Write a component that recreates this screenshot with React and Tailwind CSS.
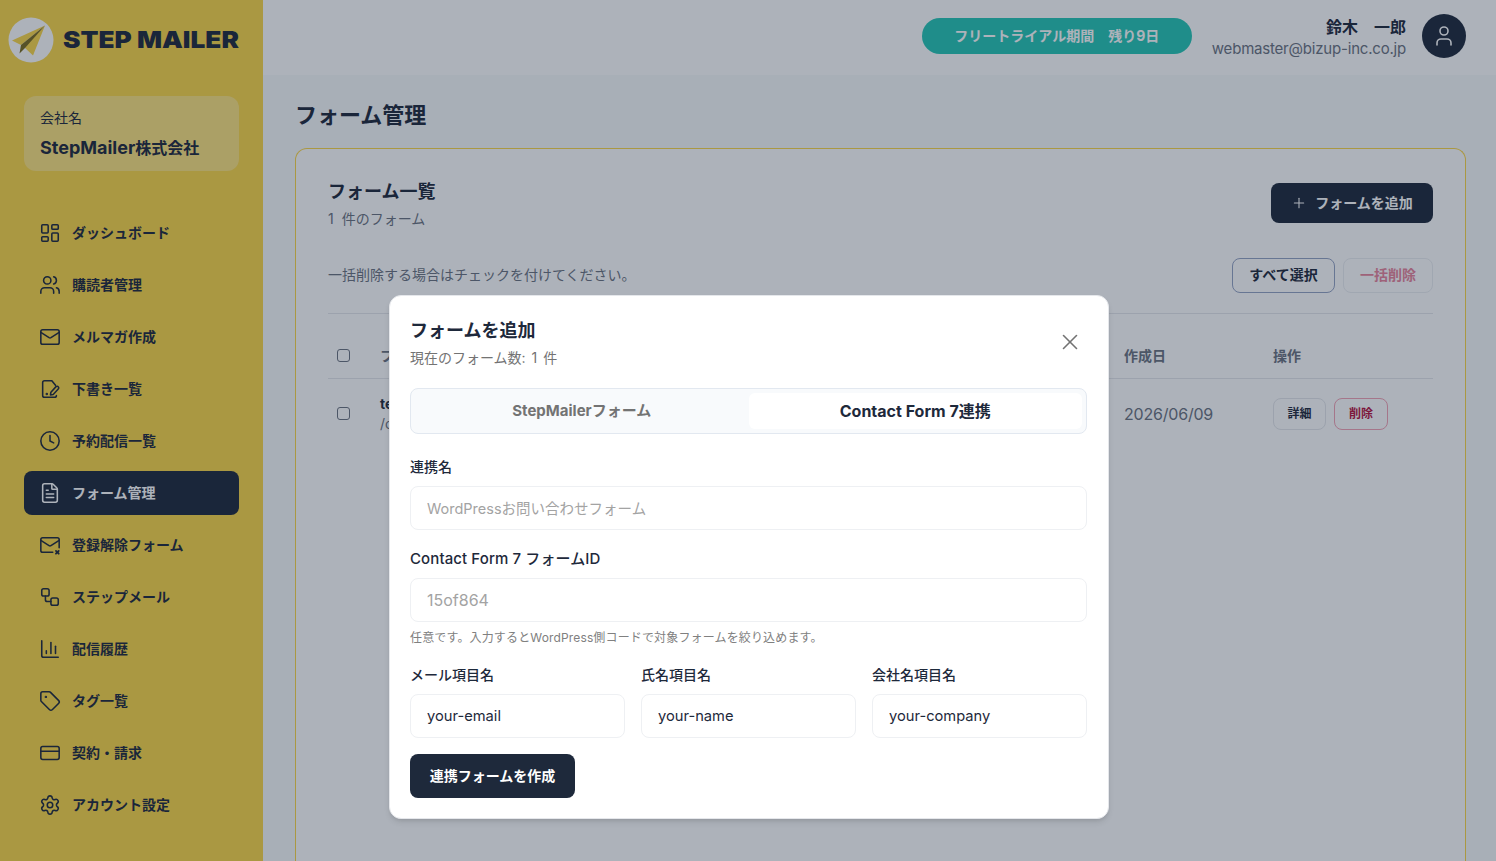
import React from 'react';
import {
  LayoutDashboard, Users, Mail, Clock, FileText, Workflow,
  ChartColumn, Tag, CreditCard, Settings, User, Plus, X,
} from 'lucide-react';

const DraftIcon = ({ size }) => (
  <svg width={size} height={size} viewBox="0 0 24 24" fill="none" stroke="currentColor" strokeWidth="1.7" strokeLinecap="round" strokeLinejoin="round">
    <path d="M18 8 14 3H6a2 2 0 0 0-2 2v14a2 2 0 0 0 2 2h11a2 2 0 0 0 2-2" />
    <path d="M21 9.5a1.6 1.6 0 0 0-2.4-.1L13 15.5l-.5 3 3-.5 5.5-6a1.8 1.8 0 0 0 0-2.5Z" />
    <circle cx="8.5" cy="17.5" r="0.5" fill="currentColor" />
  </svg>
);

const UnsubscribeIcon = ({ size }) => (
  <svg width={size} height={size} viewBox="0 0 24 24" fill="none" stroke="currentColor" strokeWidth="1.7" strokeLinecap="round" strokeLinejoin="round">
    <path d="M22 15V6a2 2 0 0 0-2-2H4a2 2 0 0 0-2 2v12a2 2 0 0 0 2 2h11" />
    <path d="m22 7-8.97 5.7a1.94 1.94 0 0 1-2.06 0L2 7" />
    <path d="m18.5 18.5 3 3" strokeWidth="2" />
    <path d="m21.5 18.5-3 3" strokeWidth="2" />
  </svg>
);

const navItems = [
  { label: 'ダッシュボード', icon: LayoutDashboard },
  { label: '購読者管理', icon: Users },
  { label: 'メルマガ作成', icon: Mail },
  { label: '下書き一覧', icon: DraftIcon },
  { label: '予約配信一覧', icon: Clock },
  { label: 'フォーム管理', icon: FileText, active: true },
  { label: '登録解除フォーム', icon: UnsubscribeIcon },
  { label: 'ステップメール', icon: Workflow },
  { label: '配信履歴', icon: ChartColumn },
  { label: 'タグ一覧', icon: Tag },
  { label: '契約・請求', icon: CreditCard },
  { label: 'アカウント設定', icon: Settings },
];

const Logo = () => (
  <svg viewBox="0 0 46 46" className="h-[46px] w-[46px] shrink-0">
    <circle cx="23" cy="23" r="22.5" fill="#fff" />
    <path d="M37 8.5 4 23.5 13 28Z" fill="#fbd748" />
    <path d="M37 8.5 16 30 25 38.5Z" fill="#fbd748" />
    <path d="M37 8.5 13 28 11.5 36.5 17 31Z" fill="#7a6a1e" />
  </svg>
);

const Sidebar = () => (
  <aside className="flex h-full w-[263px] shrink-0 flex-col bg-[#fbd748]">
    <div className="flex h-[80px] items-center gap-[9px] pl-2">
      <Logo />
      <span className="origin-left scale-x-[1.14] text-[23px] font-black text-[#1e293b]">STEP MAILER</span>
    </div>
    <div className="mx-6 mt-4 h-[75px] rounded-xl bg-white/30 px-4 pt-3">
      <div className="text-sm leading-5 text-[#1e293b]">会社名</div>
      <div className="mt-[6px] text-lg leading-7 font-bold text-[#1e293b]">StepMailer<span className="text-base">株式会社</span></div>
    </div>
    <nav className="mt-[40px] flex flex-col gap-2 px-6">
      {navItems.map(({ label, icon: Icon, active }) => (
        <div
          key={label}
          className={`flex h-11 items-center gap-[11px] rounded-lg px-[15px] text-sm font-bold ${
            active ? 'bg-[#1e293b] text-white' : 'text-[#1e293b]'
          }`}
        >
          <Icon size={22} strokeWidth={1.7} />
          <span>{label}</span>
        </div>
      ))}
    </nav>
  </aside>
);

const Header = () => (
  <header className="flex h-[75px] shrink-0 items-center justify-end bg-white pr-[30px] pb-[3px]">
    <div className="mr-5 flex h-9 w-[270px] items-center justify-center rounded-full bg-[#26c6b5] text-sm font-bold text-white">
      フリートライアル期間　残り9日
    </div>
    <div className="mt-[2px] mr-4 text-right">
      <div className="text-base leading-6 font-bold text-[#1e293b]">鈴木　一郎</div>
      <div className="text-[15px] leading-5 tracking-[-0.2px] text-[#6b7280]">webmaster@bizup-inc.co.jp</div>
    </div>
    <div className="flex h-11 w-11 items-center justify-center rounded-full bg-[#1e293b] text-white">
      <User size={24} strokeWidth={1.6} />
    </div>
  </header>
);

const FormList = () => (
  <div className="mt-[17px] flex-1 rounded-t-xl border border-b-0 border-[#fbd748] bg-white px-8 pt-[32px]">
    <div className="flex items-start justify-between">
      <div>
        <h2 className="text-lg leading-[22px] font-bold text-[#1e293b]">フォーム一覧</h2>
        <p className="mt-[6px] text-sm leading-5 text-[#6b7280]"><span className="mr-1">1</span> 件のフォーム</p>
      </div>
      <button className="mt-[2px] flex h-10 w-[162px] items-center justify-center gap-2 rounded-lg bg-[#1e293b] text-sm font-bold text-white">
        <Plus size={16} strokeWidth={1.6} />
        フォームを追加
      </button>
    </div>
    <div className="mt-[29px] flex items-center justify-between border-b border-[#e5e7eb] pb-5">
      <p className="pb-[2px] text-sm text-[#6b7280]">一括削除する場合はチェックを付けてください。</p>
      <div className="flex gap-2">
        <button className="h-[35px] w-[103px] rounded-lg border border-[#94a3c4] pb-[2px] text-sm font-bold text-[#1e293b]">すべて選択</button>
        <button className="h-[35px] w-[90px] rounded-lg border border-[#eceef2] pb-[2px] text-sm font-bold text-[#e8849c]">一括削除</button>
      </div>
    </div>
    <div className="flex h-[65px] items-center border-b border-[#e5e7eb] pt-[20px] text-sm font-bold text-[#6b7280]">
      <input type="checkbox" readOnly className="mb-[2px] ml-[9px] h-[13px] w-[13px] appearance-none rounded-[3px] border border-[#6b7280]" />
      <span className="ml-[30px] w-[744px]">フォーム名</span>
      <span className="w-[149px]">作成日</span>
      <span>操作</span>
    </div>
    <div className="flex h-[70px] items-center">
      <input type="checkbox" readOnly className="mb-[2px] ml-[9px] h-[13px] w-[13px] appearance-none rounded-[3px] border border-[#6b7280]" />
      <div className="ml-[30px] w-[744px] text-sm">
        <div className="font-bold text-[#1e293b]">test</div>
        <div className="text-[#6b7280]">/contact</div>
      </div>
      <span className="w-[149px] text-base tracking-[-0.2px] text-[#6b7280]">2026/06/09</span>
      <button className="h-8 w-[53px] rounded-lg border border-[#e5e7eb] text-xs font-bold text-[#1e293b]">詳細</button>
      <button className="ml-2 h-8 w-[54px] rounded-lg border border-[#f3a3b5] text-xs font-bold text-[#b5123f]">削除</button>
    </div>
  </div>
);

const Field = ({ label, placeholder, value, className = '', labelClass = 'text-sm', inputClass = 'text-[14.7px]' }) => (
  <label className={`block ${className}`}>
    <span className={`block leading-5 font-medium text-[#1e293b] ${labelClass}`}>{label}</span>
    <input
      readOnly
      placeholder={placeholder}
      value={value}
      className={`mt-[9px] h-11 w-full rounded-lg border border-[#eef0f3] bg-white px-4 text-[#1e293b] outline-none placeholder:text-[#a3a3a3] ${inputClass}`}
    />
  </label>
);

const Modal = () => (
  <div className="absolute inset-0 flex items-end justify-center bg-[#14233a]/35 pb-[42px] pl-[2px]">
    <div className="relative h-[524px] w-[720px] rounded-xl border border-[#e5e7eb] bg-white pt-[21px] pr-[21px] pl-[20px] shadow-md">
      <button className="absolute top-[33px] right-[25px] text-[#737373]">
        <X size={26} strokeWidth={1.5} />
      </button>
      <h3 className="text-lg leading-7 font-bold text-[#1e293b]">フォームを追加</h3>
      <p className="mt-[3px] text-sm leading-5 text-[#737373]">現在のフォーム数: <span className="mx-[2px]">1</span> 件</p>
      <div className="mt-[20px] flex h-[46px] rounded-lg border border-[#e2e8f0] bg-[#f8fafc] p-1">
        <div className="flex flex-1 items-center justify-center pt-px text-[15px] font-bold text-[#737373]">StepMailerフォーム</div>
        <div className="flex flex-1 items-center justify-center rounded-md bg-white text-base font-bold text-[#1e293b]">Contact Form 7連携</div>
      </div>
      <Field className="mt-[23px]" label="連携名" placeholder="WordPressお問い合わせフォーム" inputClass="text-[14.5px]" />
      <Field className="mt-[19px]" label="Contact Form 7 フォームID" labelClass="text-[15px] tracking-[0.1px]" placeholder="15of864" inputClass="text-base" />
      <p className="mt-2 text-xs leading-4 tracking-[0.15px] text-[#808080]">任意です。入力するとWordPress側コードで対象フォームを絞り込めます。</p>
      <div className="mt-[19px] grid grid-cols-3 gap-4">
        <Field label="メール項目名" value="your-email" />
        <Field label="氏名項目名" value="your-name" />
        <Field label="会社名項目名" value="your-company" />
      </div>
      <button className="mt-4 h-11 w-[165px] rounded-lg bg-[#1e293b] text-sm font-bold text-white">連携フォームを作成</button>
    </div>
  </div>
);

export default function App() {
  return (
    <div className="relative flex h-[861px] w-[1496px] overflow-hidden font-['Inter','Noto_Sans_CJK_JP',sans-serif]">
      <Sidebar />
      <div className="flex min-w-0 flex-1 flex-col bg-[#f8fafb]">
        <Header />
        <main className="flex min-h-0 flex-1 flex-col pt-6 pr-[30px] pl-[32px]">
          <h1 className="text-[22px] leading-8 font-bold text-[#1e293b]">フォーム管理</h1>
          <FormList />
        </main>
      </div>
      <Modal />
    </div>
  );
}
